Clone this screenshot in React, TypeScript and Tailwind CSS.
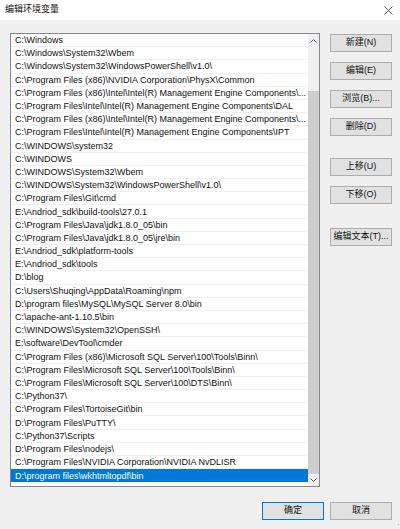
import React from "react";

const rows = [
  "C:\\Windows",
  "C:\\Windows\\System32\\Wbem",
  "C:\\Windows\\System32\\WindowsPowerShell\\v1.0\\",
  "C:\\Program Files (x86)\\NVIDIA Corporation\\PhysX\\Common",
  "C:\\Program Files (x86)\\Intel\\Intel(R) Management Engine Components\\...",
  "C:\\Program Files\\Intel\\Intel(R) Management Engine Components\\DAL",
  "C:\\Program Files (x86)\\Intel\\Intel(R) Management Engine Components\\...",
  "C:\\Program Files\\Intel\\Intel(R) Management Engine Components\\IPT",
  "C:\\WINDOWS\\system32",
  "C:\\WINDOWS",
  "C:\\WINDOWS\\System32\\Wbem",
  "C:\\WINDOWS\\System32\\WindowsPowerShell\\v1.0\\",
  "C:\\Program Files\\Git\\cmd",
  "E:\\Andriod_sdk\\build-tools\\27.0.1",
  "C:\\Program Files\\Java\\jdk1.8.0_05\\bin",
  "C:\\Program Files\\Java\\jdk1.8.0_05\\jre\\bin",
  "E:\\Andriod_sdk\\platform-tools",
  "E:\\Andriod_sdk\\tools",
  "D:\\blog",
  "C:\\Users\\Shuqing\\AppData\\Roaming\\npm",
  "D:\\program files\\MySQL\\MySQL Server 8.0\\bin",
  "C:\\apache-ant-1.10.5\\bin",
  "C:\\WINDOWS\\System32\\OpenSSH\\",
  "E:\\software\\DevTool\\cmder",
  "C:\\Program Files (x86)\\Microsoft SQL Server\\100\\Tools\\Binn\\",
  "C:\\Program Files\\Microsoft SQL Server\\100\\Tools\\Binn\\",
  "C:\\Program Files\\Microsoft SQL Server\\100\\DTS\\Binn\\",
  "C:\\Python37\\",
  "C:\\Program Files\\TortoiseGit\\bin",
  "D:\\Program Files\\PuTTY\\",
  "C:\\Python37\\Scripts",
  "D:\\Program Files\\nodejs\\",
  "C:\\Program Files\\NVIDIA Corporation\\NVIDIA NvDLISR",
  "D:\\program files\\wkhtmltopdf\\bin",
];

function Btn({ label, def }: { label: string; def?: boolean }) {
  return (
    <div
      className={
        "w-[62px] h-[18px] flex items-center justify-center text-[9px] text-[#111] bg-[#e1e1e1] border " +
        (def ? "border-[#0078d7]" : "border-[#adadad]")
      }
    >
      {label}
    </div>
  );
}

export default function App() {
  return (
    <div
      className="w-[400px] h-[529px] bg-[#f0f0f0] flex flex-col overflow-hidden relative"
      style={{ fontFamily: '"Liberation Sans", "Noto Sans CJK SC", sans-serif' }}
    >
      <div className="h-[20px] bg-white flex items-center justify-between pl-[5px] pr-[7px] shrink-0">
        <span className="text-[9px] text-[#111]">编辑环境变量</span>
        <svg width="9" height="9" viewBox="0 0 9 9">
          <path d="M0.5 0.5 L8.5 8.5 M8.5 0.5 L0.5 8.5" stroke="#444" strokeWidth="0.9" fill="none" />
        </svg>
      </div>
      <div className="flex pl-[10px] pt-[13px]">
        <div className="w-[310px] h-[454px] border border-[#828790] bg-white flex">
          <div className="flex-1 flex flex-col overflow-hidden">
            {rows.map((r, i) => {
              const sel = i === rows.length - 1;
              return (
                <div
                  key={i}
                  className={
                    "h-[13.2px] shrink-0 flex items-center pl-[4px] pt-[1px] whitespace-nowrap overflow-hidden text-[9px] leading-none " +
                    (sel ? "bg-[#0078d7] text-white" : "text-[#111] border-b border-[#f0f0f0]")
                  }
                >
                  {r}
                </div>
              );
            })}
          </div>
          <div className="w-[11px] bg-[#f0f0f0] flex flex-col shrink-0">
            <div className="h-[14px] flex items-center justify-center">
              <svg width="7" height="4" viewBox="0 0 7 4">
                <path d="M0.5 3.5 L3.5 0.5 L6.5 3.5" stroke="#606060" strokeWidth="1" fill="none" />
              </svg>
            </div>
            <div className="h-[43px]" />
            <div className="flex-1 bg-[#cdcdcd]" />
            <div className="h-[12px] flex items-center justify-center">
              <svg width="7" height="4" viewBox="0 0 7 4">
                <path d="M0.5 0.5 L3.5 3.5 L6.5 0.5" stroke="#606060" strokeWidth="1" fill="none" />
              </svg>
            </div>
          </div>
        </div>
        <div className="ml-[10px] pt-[1px] flex flex-col">
          <Btn label="新建(N)" />
          <div className="h-[10px]" />
          <Btn label="编辑(E)" />
          <div className="h-[10px]" />
          <Btn label="浏览(B)..." />
          <div className="h-[10px]" />
          <Btn label="删除(D)" />
          <div className="h-[22px]" />
          <Btn label="上移(U)" />
          <div className="h-[10px]" />
          <Btn label="下移(O)" />
          <div className="h-[24px]" />
          <Btn label="编辑文本(T)..." />
        </div>
      </div>
      <div className="flex justify-end gap-[6px] pr-[8px] pt-[15px]">
        <Btn label="确定" def />
        <Btn label="取消" />
      </div>
      <div className="absolute right-[1px] bottom-[1px] w-[4px] h-[4px] flex flex-wrap">
        <span className="w-[1px] h-[1px] bg-[#b0b0b0] ml-[3px]" />
      </div>
    </div>
  );
}
